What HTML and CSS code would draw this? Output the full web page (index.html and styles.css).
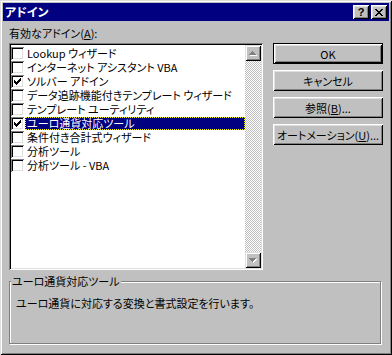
FILE: index.html
```html
<!DOCTYPE html>
<html lang="ja">
<head>
  <meta charset="UTF-8" />
  <title>アドイン</title>
  <link rel="stylesheet" href="styles.css">
</head>
<body>

  <div class="dialog">
    <div class="titlebar">
      <span class="title">アドイン</span>
      <div class="caption-buttons">
        <div class="cap-btn help">?</div>
        <div class="cap-btn close">
          <svg width="8" height="7" viewBox="0 0 8 7"><path d="M0 0h2v1h1v1h2v-1h1v-1h2v1h-1v1h-1v1h-1v1h1v1h1v1h1v1h-2v-1h-1v-1h-2v1h-1v1h-2v-1h1v-1h1v-1h1v-1h-1v-1h-1v-1h-1z" fill="#000"/></svg>
        </div>
      </div>
    </div>

    <div class="content">
      <div class="label">有効なアドイン(<u>A</u>):</div>

      <div class="main-row">
        <div class="listbox">
          <ul class="items">
            <li><span class="check"></span><span class="name">Lookup ウィザード</span></li>
            <li><span class="check"></span><span class="name">インターネット アシスタント VBA</span></li>
            <li><span class="check checked"></span><span class="name">ソルバー アドイン</span></li>
            <li><span class="check"></span><span class="name">データ追跡機能付きテンプレート ウィザード</span></li>
            <li><span class="check"></span><span class="name">テンプレート ユーティリティ</span></li>
            <li class="selected"><span class="check checked"></span><span class="name">ユーロ通貨対応ツール</span></li>
            <li><span class="check"></span><span class="name">条件付き合計式ウィザード</span></li>
            <li><span class="check"></span><span class="name">分析ツール</span></li>
            <li><span class="check"></span><span class="name">分析ツール - VBA</span></li>
          </ul>
          <div class="scrollbar">
            <div class="sb-btn">
              <svg width="16" height="16" viewBox="0 0 16 16"><path d="M8 7h1v1h1v1h1v1h1v1h-7v-1h1v-1h1v-1h1z" fill="#fff"/><path d="M7 6h1v1h1v1h1v1h1v1h-7v-1h1v-1h1v-1h1z" fill="#808080"/></svg>
            </div>
            <div class="sb-track"></div>
            <div class="sb-btn">
              <svg width="16" height="16" viewBox="0 0 16 16"><path d="M5 7h7v1h-1v1h-1v1h-1v1h-1v-1h-1v-1h-1v-1h-1z" fill="#fff"/><path d="M4 6h7v1h-1v1h-1v1h-1v1h-1v-1h-1v-1h-1v-1h-1z" fill="#808080"/></svg>
            </div>
          </div>
        </div>

        <div class="buttons">
          <div class="btn default">OK</div>
          <div class="btn">キャンセル</div>
          <div class="btn">参照(<u>B</u>)...</div>
          <div class="btn">オートメーション(<u>U</u>)...</div>
        </div>
      </div>

      <fieldset class="group">
        <legend>ユーロ通貨対応ツール</legend>
        <p>ユーロ通貨に対応する変換と書式設定を行います。</p>
      </fieldset>
    </div>
  </div>

</body>
</html>
```

FILE: styles.css
```css
* {
  box-sizing: border-box;
  margin: 0;
  padding: 0;
}

body {
  background: #c0c0c0;
  font-family: "Noto Sans CJK JP", "Liberation Sans", sans-serif;
  font-size: 11px;
  font-feature-settings: "palt";
  color: #000;
}

.dialog {
  width: 392px;
  height: 355px;
  padding: 3px;
  background: #c0c0c0;
  box-shadow: inset 1px 1px #dfdfdf, inset -1px -1px #000,
              inset 2px 2px #fff, inset -2px -2px #808080;
}

.titlebar {
  height: 18px;
  background: #000080;
  display: flex;
  align-items: center;
  justify-content: space-between;
  padding: 0 2px 0 2px;
}

.title {
  color: #fff;
  font-weight: bold;
  font-size: 12px;
  line-height: 14px;
}

.caption-buttons {
  display: flex;
  gap: 2px;
}

.cap-btn {
  width: 16px;
  height: 14px;
  background: #c0c0c0;
  display: flex;
  align-items: center;
  justify-content: center;
  box-shadow: inset 1px 1px #fff, inset -1px -1px #000,
              inset 2px 2px #dfdfdf, inset -2px -2px #808080;
}

.cap-btn.help {
  font-family: "Liberation Sans", sans-serif;
  font-weight: bold;
  font-size: 11px;
  line-height: 12px;
}

.cap-btn svg {
  display: block;
}

.content {
  padding: 0 6px;
}

.label {
  padding-top: 4px;
  height: 20px;
  line-height: 16px;
  margin-bottom: 2px;
}

.main-row {
  display: flex;
  gap: 10px;
}

.listbox {
  width: 254px;
  height: 227px;
  padding: 2px;
  background: #fff;
  display: flex;
  box-shadow: inset 1px 1px #808080, inset -1px -1px #fff,
              inset 2px 2px #000, inset -2px -2px #dfdfdf;
}

.items {
  flex: 1;
  list-style: none;
  padding-top: 1px;
}

.items li {
  height: 14px;
  display: flex;
  align-items: center;
}

.check {
  width: 13px;
  height: 13px;
  margin-right: 1px;
  background: #fff;
  box-shadow: inset 1px 1px #808080, inset -1px -1px #fff,
              inset 2px 2px #000, inset -2px -2px #dfdfdf;
}

.check.checked {
  background: #fff url("data:image/svg+xml,%3Csvg xmlns='http://www.w3.org/2000/svg' width='7' height='7' viewBox='0 0 7 7'%3E%3Cpath d='M6 0h1v3h-1v1h-1v1h-1v1h-1v1h-1v-1h-1v-1h-1v-3h1v1h1v1h1v-1h1v-1h1v-1h1z' fill='%23000'/%3E%3C/svg%3E") no-repeat 3px 3px;
}

.name {
  flex: 1;
  height: 13px;
  line-height: 11px;
  padding: 0 1px;
  border: 1px solid transparent;
  white-space: nowrap;
}

.selected .name {
  background: #000080;
  color: #fff;
  border: 1px dotted #ffff00;
}

.scrollbar {
  width: 16px;
  display: flex;
  flex-direction: column;
}

.sb-btn {
  width: 16px;
  height: 16px;
  background: #c0c0c0;
  box-shadow: inset 1px 1px #dfdfdf, inset -1px -1px #000,
              inset 2px 2px #fff, inset -2px -2px #808080;
}

.sb-btn svg {
  display: block;
}

.sb-track {
  flex: 1;
  background-image: repeating-conic-gradient(#fff 0 25%, #c0c0c0 0 50%);
  background-size: 2px 2px;
}

.buttons {
  width: 110px;
  display: flex;
  flex-direction: column;
  gap: 6px;
}

.btn {
  height: 21px;
  display: flex;
  align-items: center;
  justify-content: center;
  white-space: nowrap;
  background: #c0c0c0;
  box-shadow: inset 1px 1px #fff, inset -1px -1px #000,
              inset 2px 2px #dfdfdf, inset -2px -2px #808080;
}

.btn.default {
  border: 1px solid #000;
}

.group {
  margin-top: 5px;
  width: 372px;
  height: 69px;
  border: 1px solid #808080;
  box-shadow: inset 1px 1px #fff, 1px 1px #fff;
}

.group legend {
  margin-left: 1px;
  padding: 0 1px;
  line-height: 12px;
  background: #c0c0c0;
}

.group p {
  margin: 9px 0 0 6px;
  line-height: 14px;
}
```
